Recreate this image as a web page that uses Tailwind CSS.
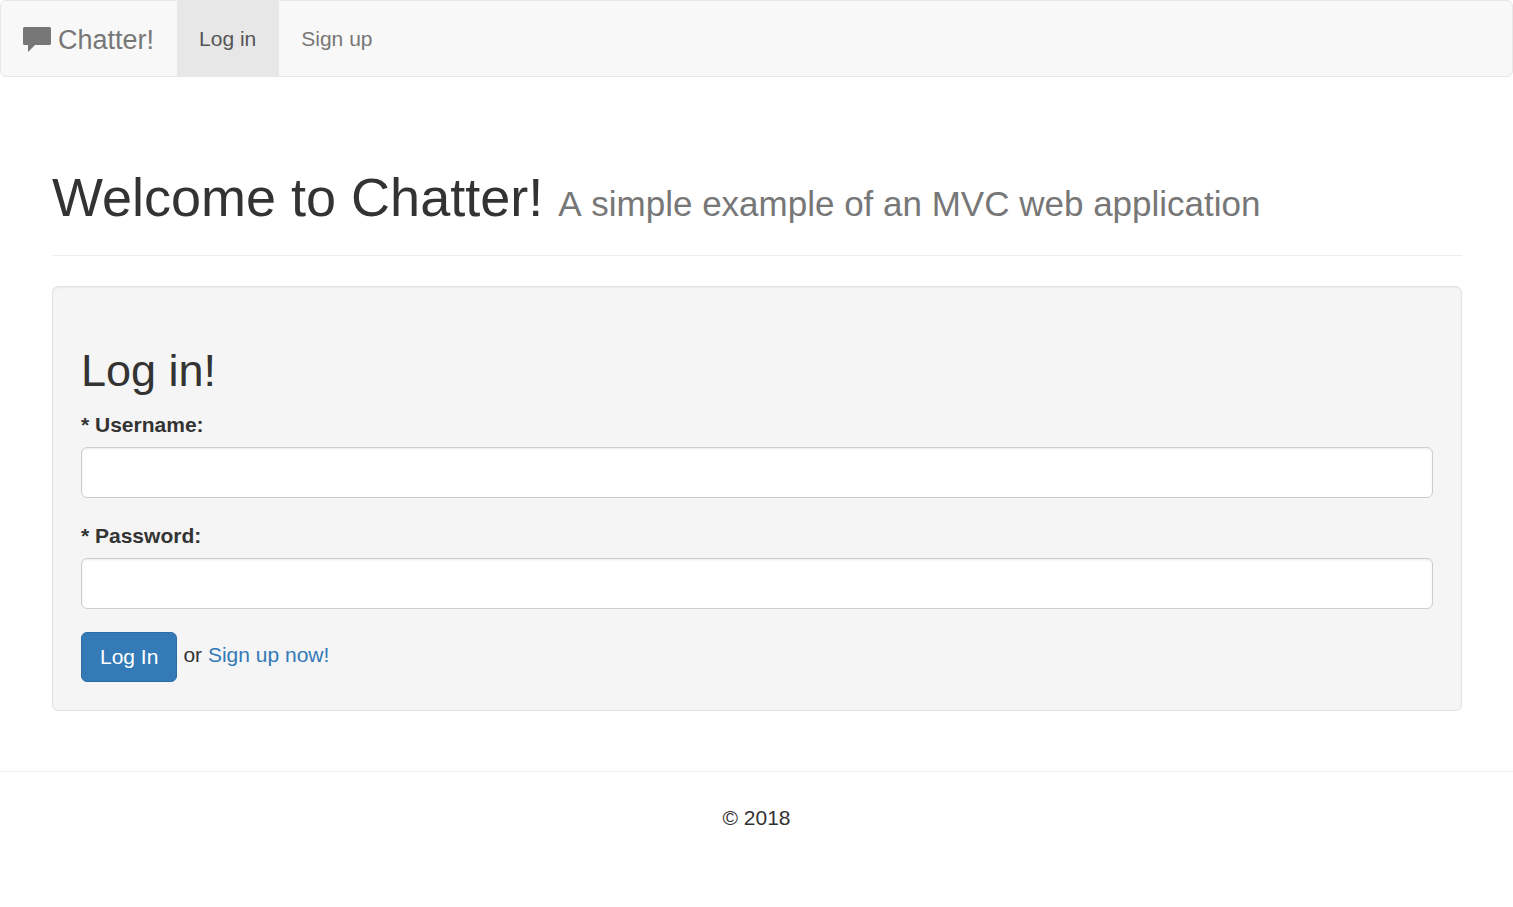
<!DOCTYPE html>
<html lang="en">
<head>
<meta charset="utf-8">
<meta name="viewport" content="width=device-width, initial-scale=1">
<title>Chatter!</title>
<script src="https://cdn.jsdelivr.net/npm/@tailwindcss/browser@4"></script>
</head>
<body class="bg-white font-['Liberation_Sans',Arial,sans-serif] text-[21px] leading-[30px] text-[#333]">
<nav class="flex rounded-md border border-[#e7e7e7] bg-[#f8f8f8] text-[#777]">
  <a href="#" class="flex items-center gap-[7px] pt-[2px] pr-[23px] pl-[22px] text-[27px]">
    <svg class="h-[26px] w-[28px]" viewBox="0 0 28 26" fill="currentColor" aria-hidden="true"><path d="M1.5 0H26.5Q28 0 28 1.5V16.5Q28 18 26.5 18H12L5 25V18H1.5Q0 18 0 16.5V1.5Q0 0 1.5 0Z"/></svg>
    <span>Chatter!</span>
  </a>
  <a href="#" class="bg-[#e7e7e7] pt-[23px] pr-[23px] pb-[22px] pl-[22px] text-[#555]">Log in</a>
  <a href="#" class="px-[22px] pt-[23px] pb-[22px]">Sign up</a>
</nav>
<main class="pt-[90px] pr-[51px] pl-[52px]">
  <header class="mb-[30px] border-b border-[#eee] pb-[28px]">
    <h1 class="text-[54px] leading-[60px]">Welcome to Chatter! <small class="text-[35px] leading-none text-[#777] [font-kerning:none]">A simple example of an MVC web application</small></h1>
  </header>
  <form class="rounded-md border border-[#e3e3e3] bg-[#f5f5f5] px-[28px] pt-[59px] pb-[28px] shadow-[inset_0_1px_2px_rgba(0,0,0,0.05)]">
    <h2 class="mb-[14px] text-[45px] leading-[50px]">Log in!</h2>
    <label for="username" class="mb-[7px] block font-bold">* Username:</label>
    <input id="username" type="text" class="mb-[23px] block h-[51px] w-full rounded-md border border-[#ccc] bg-white px-[18px] shadow-[inset_0_1px_2px_rgba(0,0,0,0.075)]">
    <label for="password" class="mb-[7px] block font-bold">* Password:</label>
    <input id="password" type="password" class="mb-[23px] block h-[51px] w-full rounded-md border border-[#ccc] bg-white px-[18px] shadow-[inset_0_1px_2px_rgba(0,0,0,0.075)]">
    <div class="flex items-center gap-[6px]">
      <button type="submit" class="h-[50px] rounded-md border border-[#2e6da4] bg-[#337ab7] px-[18px] text-white">Log In</button>
      <p class="pb-1">or <a href="#" class="text-[#337ab7]">Sign up now!</a></p>
    </div>
  </form>
</main>
<footer class="mt-[60px] border-t border-[#eee] pt-[31px] text-center">© 2018</footer>
</body>
</html>
